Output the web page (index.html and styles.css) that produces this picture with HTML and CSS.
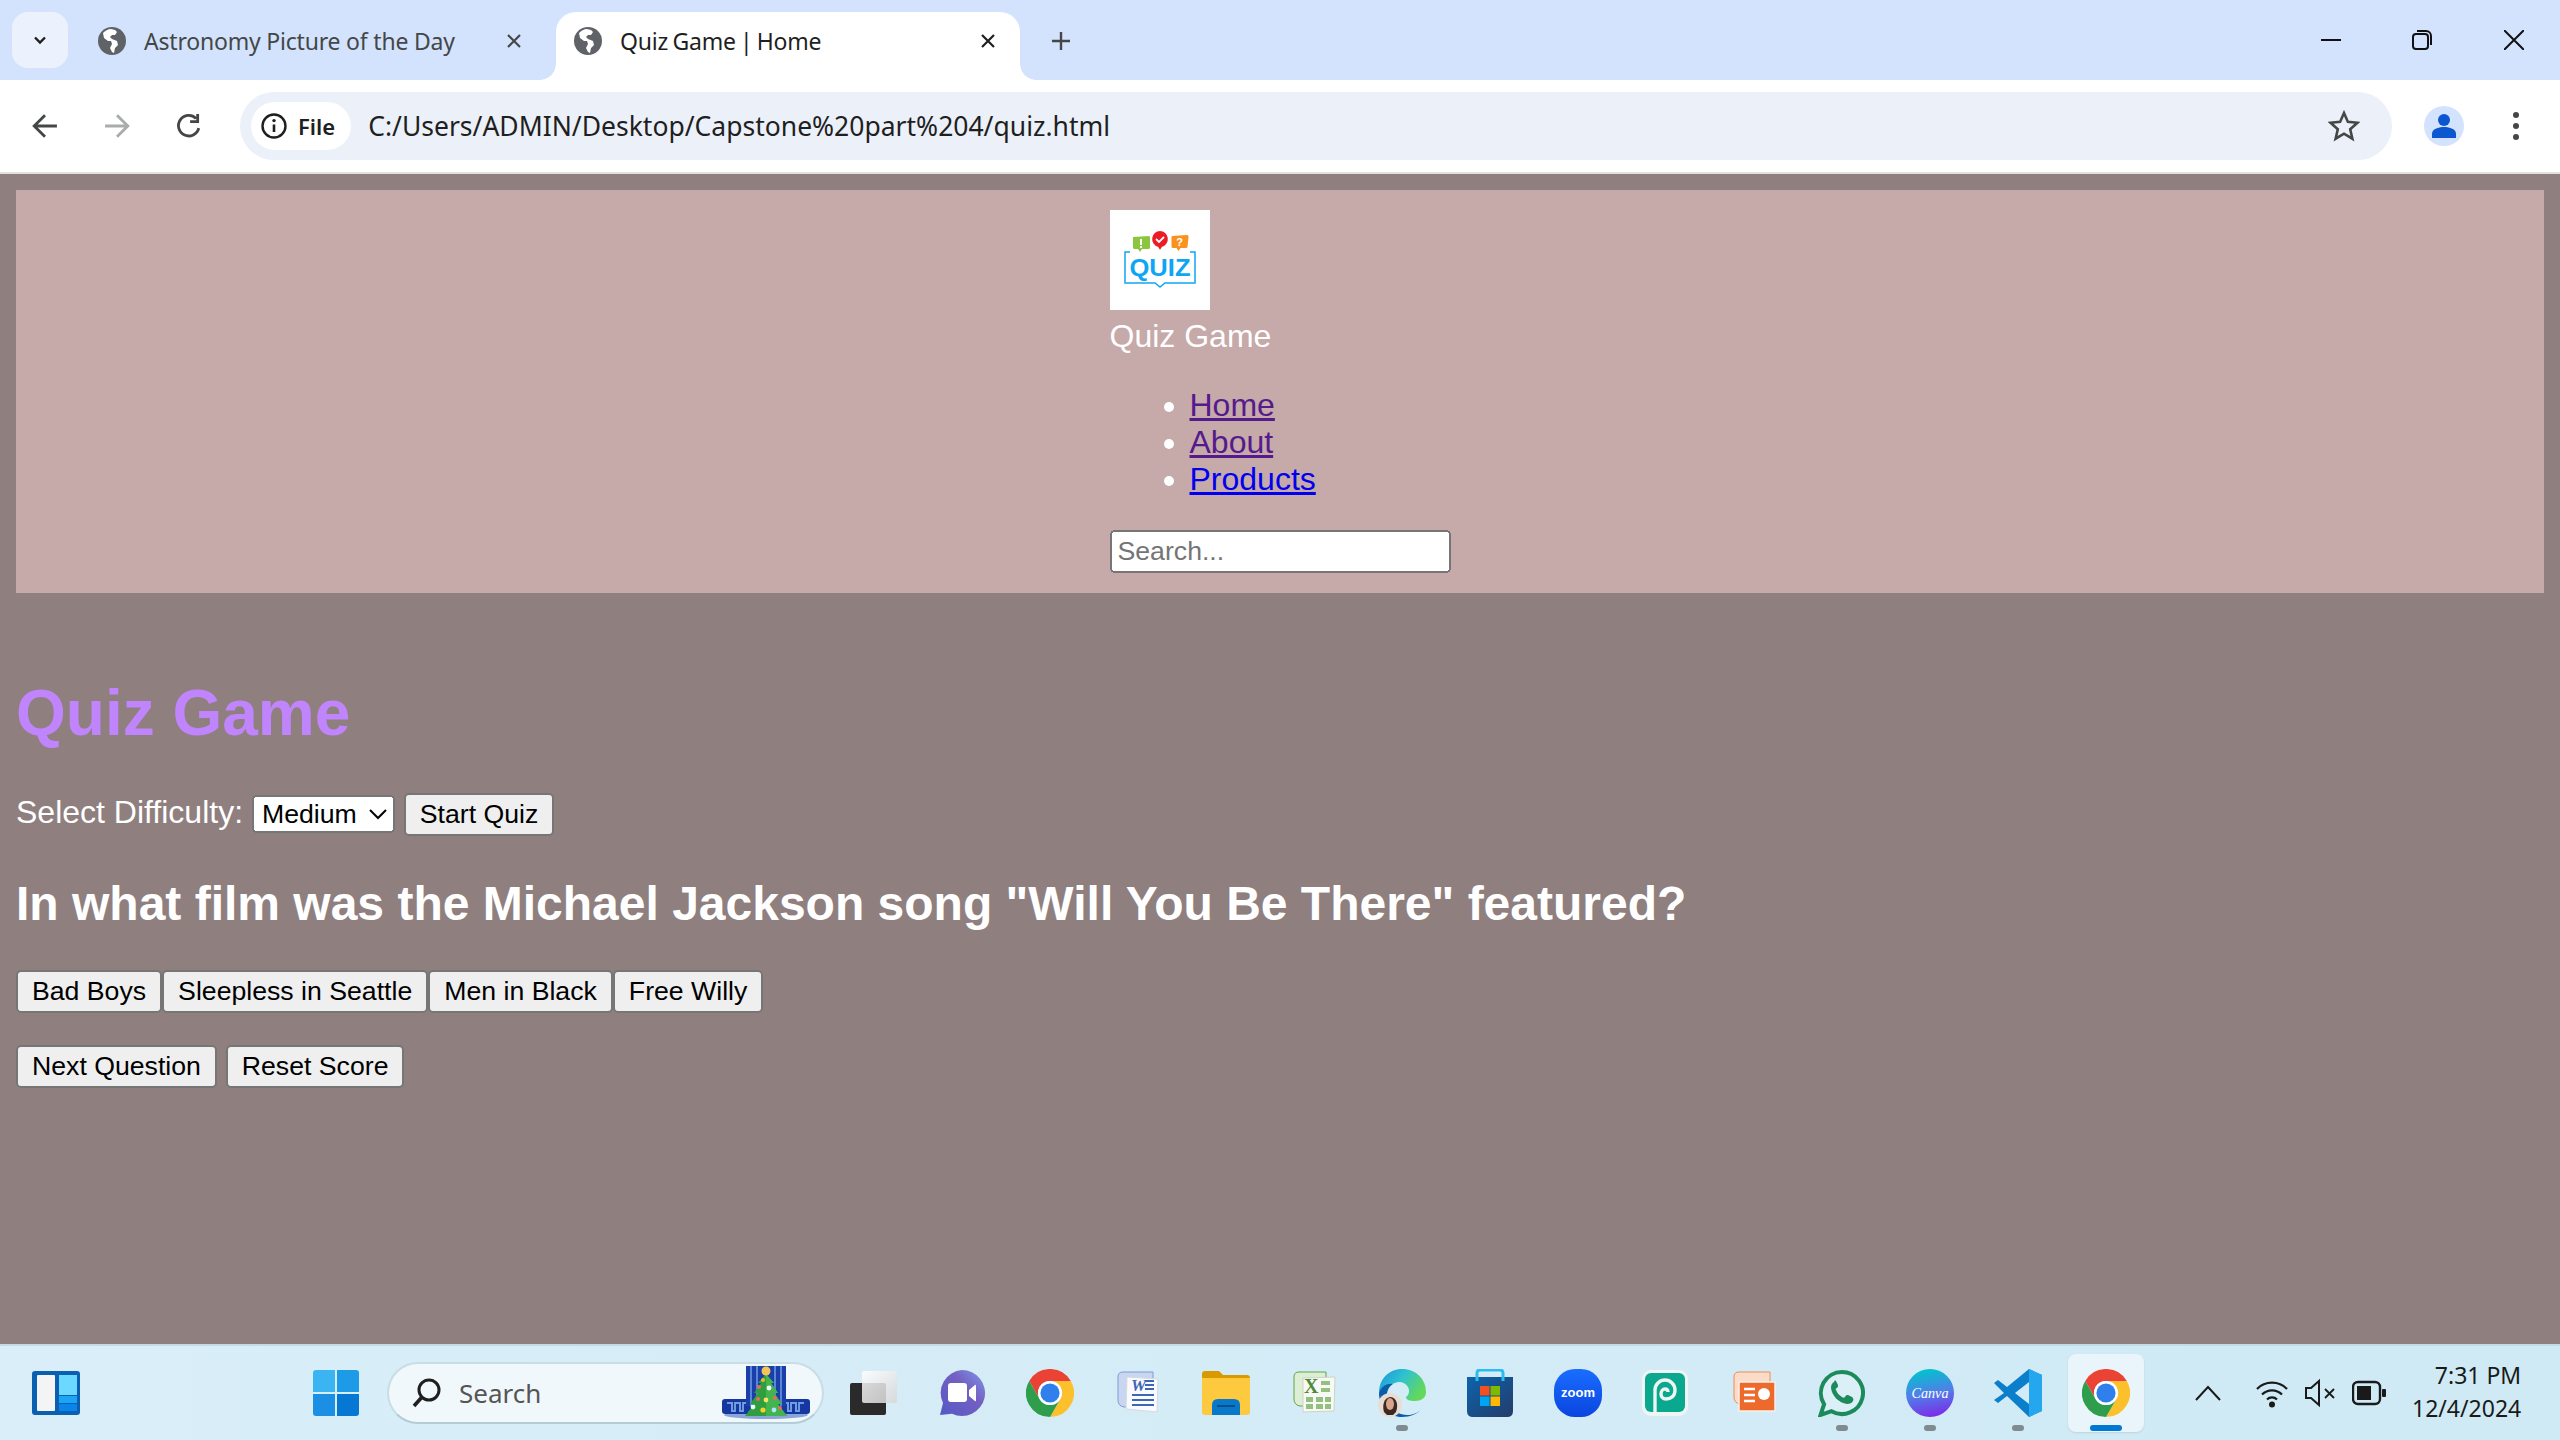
FILE: index.html
```html
<!DOCTYPE html>
<html lang="en">
<head>
    <meta charset="UTF-8">
    <meta name="viewport" content="width=device-width, initial-scale=1.0">
    <title>Quiz Game | Home</title>
    <link rel="stylesheet" href="styles.css">
</head>
<body>
    <svg class="defs" width="0" height="0">
        <defs>
            <linearGradient id="meetFill" x1="0" y1="1" x2="1" y2="0"><stop offset="0" stop-color="#5458c4"/><stop offset=".6" stop-color="#7460c2"/><stop offset="1" stop-color="#7f9ae8"/></linearGradient>
            <linearGradient id="edgeTop" x1="0" y1="0" x2="1" y2=".5"><stop offset="0" stop-color="#1b93dc"/><stop offset=".5" stop-color="#2fc2cf"/><stop offset="1" stop-color="#62d85c"/></linearGradient>
            <linearGradient id="storeFill" x1="0" y1="0" x2="1" y2="1"><stop offset="0" stop-color="#0d63ad"/><stop offset="1" stop-color="#243c69"/></linearGradient>
            <linearGradient id="zoomFill" x1="0" y1="0" x2="0" y2="1"><stop offset="0" stop-color="#1a6dff"/><stop offset="1" stop-color="#0a45df"/></linearGradient>
            <linearGradient id="canvaFill" x1=".4" y1="0" x2=".6" y2="1"><stop offset="0" stop-color="#00c4cc"/><stop offset=".5" stop-color="#4f80e8"/><stop offset="1" stop-color="#7d2ae8"/></linearGradient>
            <linearGradient id="taskLight" x1="0" y1="0" x2="1" y2="1"><stop offset="0" stop-color="#fff"/><stop offset="1" stop-color="#d6d6d6"/></linearGradient>
        </defs>
        <symbol id="globe" viewBox="0 0 28 28">
            <circle cx="14" cy="14" r="14" fill="#5f6368"/>
            <path d="M13 2c-3 0-6 2-8 4l1 5 4 3h3l1 3-2 4 2 4 2 1 1-5 3-3-1-4-5-2-2-2 2-2h3l2-3-2-2z" fill="#fff"/>
        </symbol>
        <symbol id="chrome" viewBox="0 0 48 48">
            <path d="M3.2 12A24 24 0 0 1 44.8 12H24A12 12 0 0 0 13.6 30Z" fill="#ea4335"/>
            <path d="M44.8 12A24 24 0 0 1 24 48L34.4 30A12 12 0 0 0 24 12Z" fill="#fcc02d"/>
            <path d="M24 48A24 24 0 0 1 3.2 12L13.6 30A12 12 0 0 0 34.4 30Z" fill="#2e9e4c"/>
            <circle cx="24" cy="24" r="12" fill="#fff"/>
            <circle cx="24" cy="24" r="9.6" fill="#2f80ed"/>
        </symbol>
    </svg>

    <div class="tabstrip">
        <div class="tab-menu">
            <svg width="16" height="16" viewBox="0 0 16 16"><path d="M3 5.500l5 5 5-5" fill="none" stroke="#1f1f1f" stroke-width="2.400"/></svg>
        </div>
        <div class="tab">
            <svg class="favicon"><use href="#globe"/></svg>
            <span class="tab-title">Astronomy Picture of the Day</span>
            <svg class="tab-close" viewBox="0 0 16 16"><path d="M2 2l12 12M14 2L2 14" stroke="#444746" stroke-width="2.200"/></svg>
        </div>
        <div class="tab tab-active">
            <svg class="favicon"><use href="#globe"/></svg>
            <span class="tab-title">Quiz Game | Home</span>
            <svg class="tab-close" viewBox="0 0 16 16"><path d="M2 2l12 12M14 2L2 14" stroke="#1f1f1f" stroke-width="2.200"/></svg>
        </div>
        <svg class="tab-new" viewBox="0 0 20 20"><path d="M10 1v18M1 10h18" stroke="#444746" stroke-width="2.400"/></svg>
        <div class="window-btns">
            <svg viewBox="0 0 20 20"><path d="M0 10h20" stroke="#111" stroke-width="2"/></svg>
            <svg viewBox="0 0 20 20"><rect x="1" y="4" width="15" height="15" rx="3" fill="none" stroke="#111" stroke-width="2"/><path d="M5 1h9a5 5 0 0 1 5 5v9" fill="none" stroke="#111" stroke-width="2"/></svg>
            <svg viewBox="0 0 20 20"><path d="M0 0l20 20M20 0L0 20" stroke="#111" stroke-width="2"/></svg>
        </div>
    </div>

    <div class="toolbar">
        <svg class="nav-icon" viewBox="0 0 24 24"><path d="M23 12H3M12 2L2 12l10 10" fill="none" stroke="#444746" stroke-width="2.600"/></svg>
        <svg class="nav-icon" viewBox="0 0 24 24"><path d="M1 12h20M12 2l10 10-10 10" fill="none" stroke="#a9abac" stroke-width="2.600"/></svg>
        <svg class="nav-icon" viewBox="0 0 24 24"><path d="M21 14a9.500 9.500 0 1 1-2.500-9M20 1v7h-7" fill="none" stroke="#444746" stroke-width="2.600"/></svg>
        <div class="omnibox">
            <div class="site-chip">
                <svg width="26" height="26" viewBox="0 0 26 26"><circle cx="13" cy="13" r="11.500" fill="none" stroke="#1f1f1f" stroke-width="2.400"/><path d="M13 11.500V19" stroke="#1f1f1f" stroke-width="2.600"/><circle cx="13" cy="7.600" r="1.700" fill="#1f1f1f"/></svg>
                <span>File</span>
            </div>
            <span class="url">C:/Users/ADMIN/Desktop/Capstone%20part%204/quiz.html</span>
            <svg class="star" viewBox="0 0 32 32"><path d="M16 3l3.900 8.900 9.600.9-7.300 6.400 2.200 9.500L16 23.700l-8.400 5 2.200-9.500-7.300-6.400 9.600-.9z" fill="none" stroke="#444746" stroke-width="2.600"/></svg>
        </div>
        <div class="avatar">
            <svg width="26" height="26" viewBox="0 0 26 26"><circle cx="13" cy="7" r="6" fill="#0b57d0"/><path d="M1 25v-4c0-5 6-7 12-7s12 2 12 7v4z" fill="#0b57d0"/></svg>
        </div>
        <div class="menu-dots"><i></i><i></i><i></i></div>
    </div>

    <div class="viewport">
        <div class="page">
            <div class="site-header">
                <div class="brand">
                    <div class="logo-line">
                        <svg class="logo" viewBox="0 0 100 100">
                            <rect width="100" height="100" fill="#fff"/>
                            <path d="M23 27l16-1q1 0 1 2v10q0 1-2 1h-6l-2 3-2-3h-4q-1 0-1-2V28q0-1 0-1z" fill="#8cc63f"/>
                            <rect x="30" y="29" width="2" height="6" fill="#fff"/><rect x="30" y="36" width="2" height="2" fill="#fff"/>
                            <path d="M50 21a8 8 0 0 1 2 15.700l-2 3-2-3a8 8 0 0 1 2-15.700z" fill="#ed1c24"/>
                            <path d="M46 29l3 3 5-5" fill="none" stroke="#fff" stroke-width="1.800"/>
                            <path d="M62 26l15-1q2 0 1.500 2l-1 10q0 1-2 1h-5l-2 3-2-3h-4q-1 0-1-2V27z" fill="#f7931e"/>
                            <text x="69.500" y="36" class="logo-mark">?</text>
                            <path d="M20 42h-5v31h30l5 4 5-4h30V42h-5" fill="none" stroke="#0ea5f5" stroke-width="1.500"/>
                            <text x="50" y="66" class="logo-text" textLength="61" lengthAdjust="spacingAndGlyphs">QUIZ</text>
                        </svg>
                    </div>
                    <div class="brand-name">Quiz Game</div>
                    <ul class="nav-list">
                        <li><a href="#" class="visited">Home</a></li>
                        <li><a href="#" class="visited">About</a></li>
                        <li><a href="#">Products</a></li>
                    </ul>
                    <input type="text" class="search-box" placeholder="Search...">
                </div>
            </div>

            <div class="quiz">
                <h1>Quiz Game</h1>
                <div class="controls">
                    <label for="difficulty">Select Difficulty:</label>
                    <select id="difficulty">
                        <option>Easy</option>
                        <option selected>Medium</option>
                        <option>Hard</option>
                    </select>
                    <button>Start Quiz</button>
                </div>
                <h2>In what film was the Michael Jackson song "Will You Be There" featured?</h2>
                <div class="answers">
                    <button>Bad Boys</button>
                    <button>Sleepless in Seattle</button>
                    <button>Men in Black</button>
                    <button>Free Willy</button>
                </div>
                <div class="actions">
                    <button>Next Question</button>
                    <button>Reset Score</button>
                </div>
            </div>
        </div>
    </div>

    <div class="taskbar">
        <svg class="widgets" viewBox="0 0 48 44">
            <rect width="48" height="44" rx="3" fill="#0b5fb0"/>
            <rect x="5" y="4" width="18" height="36" rx="1" fill="#f4f4f4"/>
            <rect x="27" y="4" width="18" height="20" fill="#6bd8ff"/>
            <rect x="27" y="25" width="18" height="7" fill="#1aa5f5"/>
            <rect x="27" y="33" width="18" height="7" fill="#0a84e8"/>
        </svg>
        <svg class="start" viewBox="0 0 46 46">
            <path d="M3 0h19v22H0V3q0-3 3-3z" fill="#3bb5f2"/>
            <path d="M24 0h19q3 0 3 3v19H24z" fill="#1e9be6"/>
            <path d="M0 24h22v22H3q-3 0-3-3z" fill="#1a8fe3"/>
            <path d="M24 24h22v19q0 3-3 3H24z" fill="#0678d4"/>
        </svg>
        <div class="task-search">
            <svg width="32" height="32" viewBox="0 0 32 32"><circle cx="18" cy="13" r="10" fill="none" stroke="#1f1f1f" stroke-width="3"/><path d="M11 20l-8 9" stroke="#1f1f1f" stroke-width="3.600"/></svg>
            <span>Search</span>
            <svg class="tree" viewBox="0 0 88 54">
                <ellipse cx="44" cy="49" rx="42" ry="4" fill="#8aa6d8"/>
                <rect x="0" y="33" width="88" height="15" rx="3" fill="#16379f"/>
                <path d="M5 37h5v8h3v-8h5v8h3v-8h5M61 37h5v8h3v-8h5v8h3v-8h5" fill="none" stroke="#6f9be0" stroke-width="2"/>
                <rect x="24" y="0" width="40" height="40" fill="#1a3fa8"/>
                <path d="M29 0v40M35 0v40M53 0v40M59 0v40" stroke="#5b86d8" stroke-width="2"/>
                <path d="M44 8l8 9h-3l7 10h-4l8 11h-4l9 12H23l9-12h-4l8-11h-4l7-10h-3z" fill="#2f9e3f"/>
                <path d="M44 8l8 9h-3l7 10h-4l8 11h-4l9 12H44z" fill="#44b54d"/>
                <circle cx="44" cy="5" r="4.500" fill="#f6c453"/>
                <circle cx="41" cy="14" r="2" fill="#f2b632"/><circle cx="37" cy="21" r="2" fill="#e96a5a"/><circle cx="47" cy="22" r="2.400" fill="#fff"/><circle cx="53" cy="32" r="2" fill="#e96a5a"/><circle cx="36" cy="33" r="2" fill="#e96a5a"/><circle cx="44" cy="34" r="2.400" fill="#f7e06a"/><circle cx="31" cy="41" r="2.400" fill="#e8fff0"/><circle cx="41" cy="44" r="2.600" fill="#f7d030"/><circle cx="52" cy="44" r="2.400" fill="#a5e8ff"/><circle cx="58" cy="42" r="2" fill="#e96a5a"/>
            </svg>
        </div>
        <div class="task-icons">
            <div class="task-slot">
                <svg class="task-icon" viewBox="0 0 48 48">
                    <rect x="0" y="14" width="36" height="32" rx="2" fill="#2a2a2a"/>
                    <rect x="12" y="2" width="35" height="32" rx="2" fill="url(#taskLight)" fill-opacity=".85"/>
                </svg>
            </div>
            <div class="task-slot">
                <svg class="task-icon" viewBox="0 0 48 48">
                    <path d="M24 1a23 23 0 1 1-10 43.700L2 46l3-12A23 23 0 0 1 24 1z" fill="url(#meetFill)"/>
                    <rect x="10" y="14" width="19" height="19" rx="3" fill="#fff"/>
                    <path d="M31 21l6-5q1-1 1 1v14q0 2-1 1l-6-5z" fill="#fff"/>
                </svg>
            </div>
            <div class="task-slot">
                <svg class="task-icon"><use href="#chrome"/></svg>
            </div>
            <div class="task-slot">
                <svg class="task-icon" viewBox="0 0 48 48">
                    <path d="M4 8q0-5 5-5h30v35H10q-6-1-6-7z" fill="#c8d6f0" stroke="#7f9bd2"/>
                    <path d="M13 8l31 2-1 33-31-3z" fill="#f9fafd" stroke="#d5dae4"/>
                    <text x="17" y="22" class="word-mark">W</text>
                    <path d="M31 12h9M31 16h9M31 20h9M18 26h22M18 31h22M18 36h22" stroke="#3f66b5" stroke-width="2.200"/>
                </svg>
            </div>
            <div class="task-slot">
                <svg class="task-icon" viewBox="0 0 48 44">
                    <path d="M0 3q0-3 3-3h14l4 4h24q3 0 3 3v6H0z" fill="#d99a00"/>
                    <path d="M0 7h48v34q0 3-3 3H3q-3 0-3-3z" fill="#fcc93f"/>
                    <path d="M10 34q0-6 6-6h16q6 0 6 6v10H10z" fill="#0a78c9"/>
                    <rect x="15" y="34" width="18" height="2" fill="#04508c"/>
                </svg>
            </div>
            <div class="task-slot">
                <svg class="task-icon" viewBox="0 0 48 48">
                    <path d="M4 8q0-5 5-5h27v34H10q-6-1-6-7z" fill="#dcefd4" stroke="#62a544"/>
                    <path d="M13 9l32-1-1 34-31 1z" fill="#f8f9f4" stroke="#ccd4c4"/>
                    <text x="14" y="24" class="excel-mark">X</text>
                    <path d="M31 12h9v4h-9zM31 19h9v4h-9zM16 28h7v5h-7zM26 28h7v5h-7zM35 28h6v5h-6zM16 35h7v5h-7zM26 35h7v5h-7zM35 35h6v5h-6z" fill="#93bf7f"/>
                </svg>
            </div>
            <div class="task-slot">
                <svg class="task-icon" viewBox="0 0 48 48">
                    <path d="M1 24C1 10 11 0 24 0c14 0 24 10 24 23 0 6-5 9-11 9-5 0-9-1-9-4 3-2 4-6 2-10-3-5-9-6-13-4C9 17 3 19 1 24z" fill="url(#edgeTop)"/>
                    <path d="M1 24c2-7 9-10 14-9-5 3-7 9-6 15 2 11 13 17 23 16 5-1 9-3 12-7-4 6-12 9-20 9C11 48 1 38 1 24z" fill="#0c5da8"/>
                    <circle cx="12" cy="36" r="12" fill="#e8ddd3"/>
                    <path d="M6 43c-2-7 0-14 6-15 6 0 9 7 6 15l-3 3H9z" fill="#3a2a22"/>
                    <ellipse cx="12" cy="35" rx="4" ry="6" fill="#d8a48c"/>
                </svg>
                <i class="run-dot"></i>
            </div>
            <div class="task-slot">
                <svg class="task-icon" viewBox="0 0 48 48">
                    <path d="M1 8h46v34q0 6-6 6H7q-6 0-6-6z" fill="url(#storeFill)"/>
                    <path d="M11 12V4q0-3 3-3h20q3 0 3 3v8" fill="none" stroke="#2bbcf0" stroke-width="3"/>
                    <rect x="14" y="17" width="9.500" height="9.500" fill="#f25022"/><rect x="24.500" y="17" width="9.500" height="9.500" fill="#7fba00"/>
                    <rect x="14" y="27.500" width="9.500" height="9.500" fill="#00a4ef"/><rect x="24.500" y="27.500" width="9.500" height="9.500" fill="#ffb900"/>
                </svg>
            </div>
            <div class="task-slot">
                <svg class="task-icon" viewBox="0 0 48 48">
                    <rect width="48" height="48" rx="21" fill="url(#zoomFill)"/>
                    <text x="24" y="28" class="zoom-mark" textLength="34" lengthAdjust="spacingAndGlyphs">zoom</text>
                </svg>
            </div>
            <div class="task-slot">
                <svg class="task-icon" viewBox="0 0 48 48">
                    <rect x="0" y="1" width="46" height="46" rx="9" fill="#eef5f2"/>
                    <rect x="3" y="4" width="40" height="39" rx="6" fill="#0aa88f"/>
                    <path d="M13 43V21a10 10 0 0 1 20 0c0 6-4 9-9 9-3 0-5-2-5-5s2-5 4-5 3 1 3 3" fill="none" stroke="#eef5f2" stroke-width="3.400"/>
                </svg>
            </div>
            <div class="task-slot">
                <svg class="task-icon" viewBox="0 0 48 48">
                    <path d="M4 8q0-5 5-5h31v32H10q-6-1-6-7z" fill="#fbdcc9" stroke="#f08a55"/>
                    <rect x="9" y="13" width="36" height="29" fill="#ee6a2c" stroke="#f7efe9" stroke-width="1.500"/>
                    <circle cx="34" cy="25" r="6" fill="#fff"/>
                    <path d="M14 20h11M14 26h11M14 32h11" stroke="#fff" stroke-width="2.500"/>
                </svg>
            </div>
            <div class="task-slot">
                <svg class="task-icon" viewBox="0 0 48 48">
                    <path d="M24 3a21 21 0 1 1-10.500 39.200L2.500 46l3.600-10.800A21 21 0 0 1 24 3z" fill="#fff" fill-opacity=".2" stroke="#1c8a5a" stroke-width="4"/>
                    <path d="M16 13c-2 1-3 3-3 6 1 8 8 15 16 16 3 0 5-1 6-3 1-2 0-3-1-4l-4-2c-1 0-2 0-3 2-1 1-2 1-3 0-3-2-5-4-6-7-1-1 0-2 1-2 1-1 1-2 1-3l-2-4c-1-1-1-1-2 1z" fill="#1c8a5a"/>
                </svg>
                <i class="run-dot"></i>
            </div>
            <div class="task-slot">
                <svg class="task-icon" viewBox="0 0 48 48">
                    <circle cx="24" cy="24" r="24" fill="url(#canvaFill)"/>
                    <text x="24" y="29" class="canva-mark" textLength="37" lengthAdjust="spacingAndGlyphs">Canva</text>
                </svg>
                <i class="run-dot"></i>
            </div>
            <div class="task-slot">
                <svg class="task-icon" viewBox="0 0 48 48">
                    <path d="M35 0l13 6v36l-13 6-22-21-9 7-4-3 10-7L0 14l4-3 9 7z" fill="#0b7fcc"/>
                    <path d="M35 0l13 6v36l-13 6z" fill="#25a7f0"/>
                    <path d="M35 13L21 24l14 11z" fill="#d3ebf6"/>
                </svg>
                <i class="run-dot"></i>
            </div>
            <div class="task-slot task-slot-active">
                <svg class="task-icon"><use href="#chrome"/></svg>
                <i class="run-bar"></i>
            </div>
        </div>
        <div class="tray">
            <svg class="tray-chevron" viewBox="0 0 26 16"><path d="M1 15L13 2l12 13" fill="none" stroke="#1a1a1a" stroke-width="2"/></svg>
            <svg class="tray-wifi" viewBox="0 0 32 32"><path d="M1 12a21 21 0 0 1 30 0M6 17.500a14 14 0 0 1 20 0M11 22.500a7 7 0 0 1 10 0" fill="none" stroke="#1a1a1a" stroke-width="2.200"/><circle cx="16" cy="27.500" r="3" fill="#1a1a1a"/></svg>
            <svg class="tray-sound" viewBox="0 0 32 32"><path d="M2 11h5l8-7v24l-8-7H2z" fill="none" stroke="#1a1a1a" stroke-width="2"/><path d="M21 12l9 9M30 12l-9 9" stroke="#1a1a1a" stroke-width="1.800"/></svg>
            <svg class="tray-battery" viewBox="0 0 34 32"><rect x="1" y="5" width="27" height="22" rx="5" fill="none" stroke="#1a1a1a" stroke-width="2.400"/><rect x="5" y="9" width="14" height="14" fill="#1a1a1a"/><rect x="30" y="12" width="4" height="8" rx="1" fill="#1a1a1a"/></svg>
            <div class="clock">
                <span>7:31 PM</span>
                <span>12/4/2024</span>
            </div>
        </div>
    </div>
</body>
</html>
```

FILE: styles.css
```css
* {
    box-sizing: border-box;
}
html, body {
    margin: 0;
    height: 100%;
}
body {
    display: flex;
    flex-direction: column;
    overflow: hidden;
    font-family: "Noto Sans", sans-serif;
}
.defs {
    position: absolute;
}

/* browser tabs */
.tabstrip {
    display: flex;
    align-items: flex-end;
    height: 80px;
    background-color: #d3e3fd;
    flex: none;
}
.tab-menu {
    display: flex;
    align-items: center;
    justify-content: center;
    width: 56px;
    height: 56px;
    margin: 0 12px 12px 12px;
    background-color: #ebf2fe;
    border-radius: 16px;
}
.tab {
    display: flex;
    align-items: center;
    width: 488px;
    height: 68px;
    padding: 0 46px 10px 18px;
    color: #444746;
    font-size: 23px;
}
.tab-active {
    position: relative;
    width: 464px;
    margin-left: -12px;
    padding: 0 24px 10px 18px;
    background-color: #fff;
    color: #1f1f1f;
    border-radius: 20px 20px 0 0;
}
.tab-active .tab-title {
    word-spacing: -1.500px;
}
.tab-active::before,
.tab-active::after {
    content: "";
    position: absolute;
    bottom: 0;
    width: 16px;
    height: 16px;
}
.tab-active::before {
    left: -16px;
    background: radial-gradient(circle at 0 0, #d3e3fd 15.500px, #fff 16px);
}
.tab-active::after {
    right: -16px;
    background: radial-gradient(circle at 100% 0, #d3e3fd 15.500px, #fff 16px);
}
.favicon {
    width: 28px;
    height: 28px;
    flex: none;
}
.tab-title {
    flex: 1;
    margin-left: 18px;
    white-space: nowrap;
    letter-spacing: -0.2px;
}
.tab-close {
    width: 16px;
    height: 16px;
    flex: none;
}
.tab-new {
    width: 20px;
    height: 20px;
    margin: 0 0 29px 31px;
}
.window-btns {
    display: flex;
    gap: 72px;
    margin: 0 36px 30px auto;
}
.window-btns svg {
    width: 20px;
    height: 20px;
}
.window-btns svg:first-child {
    margin-right: -1px;
}

/* address bar */
.toolbar {
    display: flex;
    align-items: center;
    flex: none;
    height: 94px;
    padding-left: 32px;
    background-color: #fff;
    border-bottom: 2px solid #e0e0e0;
    border-radius: 16px 16px 0 0;
}
.nav-icon {
    width: 26px;
    height: 26px;
    margin-right: 46px;
}
.nav-icon:nth-child(3) {
    margin-right: 38px;
}
.omnibox {
    display: flex;
    align-items: center;
    flex: 1;
    height: 68px;
    padding: 0 32px 0 11px;
    background-color: #ebf0f9;
    border-radius: 34px;
}
.site-chip {
    display: flex;
    align-items: center;
    gap: 11px;
    height: 48px;
    padding: 0 16px 0 10px;
    background-color: #fff;
    border-radius: 24px;
    color: #1f1f1f;
    font-size: 22px;
    font-weight: 600;
}
.url {
    flex: 1;
    margin-left: 17px;
    color: #1f1f1f;
    font-size: 26.500px;
}
.star {
    width: 32px;
    height: 32px;
}
.avatar {
    display: flex;
    align-items: center;
    justify-content: center;
    width: 40px;
    height: 40px;
    margin-left: 32px;
    background-color: #d3e3fd;
    border-radius: 50%;
}
.menu-dots {
    display: flex;
    flex-direction: column;
    gap: 5px;
    margin: 0 41px 0 49px;
}
.menu-dots i {
    width: 6px;
    height: 6px;
    background-color: #444746;
    border-radius: 50%;
}

/* the quiz page itself, drawn at 200% like the browser zoom */
.viewport {
    flex: 1;
    min-height: 0;
    background-color: #8f7f7f;
}
.page {
    zoom: 2;
    padding: 8px;
    color: #fff;
    font-family: "Liberation Sans", Arial, sans-serif;
    font-size: 16px;
}
.site-header {
    display: flex;
    justify-content: center;
    padding: 10px;
    background-color: #c6a9a9;
}
.brand {
    width: 170.500px;
}
.logo {
    width: 50px;
    height: 50px;
}
.nav-list {
    margin: 16px 0;
    padding-left: 40px;
}
.visited {
    color: #551a8b;
}
.nav-list a:not(.visited) {
    color: #0000ee;
}
.search-box {
    display: block;
    width: 100%;
    padding: 1px 2px;
    font-family: "Liberation Sans", Arial, sans-serif;
    font-size: 13.333px;
}
.logo-text {
    fill: #0ea5f5;
    font-family: "Liberation Sans", Arial, sans-serif;
    font-size: 24px;
    font-weight: bold;
    text-anchor: middle;
}
.logo-mark {
    fill: #fff;
    font-family: "Liberation Sans", Arial, sans-serif;
    font-size: 11px;
    font-weight: bold;
    text-anchor: middle;
}
.quiz {
    padding-top: 20px;
}
h1 {
    margin: 21.440px 0;
    color: #c084fc;
    font-size: 32px;
}
h2 {
    margin: 19.920px 0;
    font-size: 24px;
}
.quiz button,
.quiz select {
    font-family: "Liberation Sans", Arial, sans-serif;
    font-size: 13.333px;
}
.quiz select {
    width: 71.500px;
}
.answers {
    display: flex;
    margin-bottom: 16px;
}

/* windows taskbar */
.taskbar {
    position: relative;
    display: flex;
    align-items: center;
    flex: none;
    height: 96px;
    background: linear-gradient(90deg, #d9eef8, #cfeaf5);
    border-top: 2px solid #c3dbe5;
}
.widgets {
    width: 48px;
    height: 44px;
    margin-left: 32px;
}
.start {
    width: 46px;
    height: 46px;
    margin-left: 233px;
}
.task-search {
    display: flex;
    align-items: center;
    width: 437px;
    height: 62px;
    margin-left: 28px;
    padding-left: 22px;
    background-color: #f1f8fc;
    border: 2px solid #c8dde6;
    border-bottom-color: #b4ccd6;
    border-radius: 31px;
    color: #555;
    font-size: 26px;
}
.task-search span {
    flex: 1;
    margin-left: 16px;
}
.tree {
    width: 88px;
    height: 54px;
    margin-right: 12px;
}
.task-icons {
    display: flex;
    margin-left: 6px;
}
.task-slot {
    position: relative;
    display: flex;
    align-items: center;
    justify-content: center;
    width: 88px;
    height: 78px;
}
.task-icon {
    width: 48px;
    height: 48px;
}
.task-slot-active {
    background-color: #eaf5fb;
    border-radius: 8px;
    box-shadow: 0 1px 2px #bcd3dd;
    width: 76px;
    margin-left: 6px;
}
.run-dot,
.run-bar {
    position: absolute;
    bottom: 1px;
    left: 50%;
    width: 12px;
    height: 6px;
    margin-left: -6px;
    background-color: #7f8b91;
    border-radius: 3px;
}
.run-bar {
    bottom: 1px;
    width: 32px;
    margin-left: -16px;
    background-color: #0078d4;
}
.word-mark {
    fill: #3f66b5;
    font-family: "Liberation Serif", serif;
    font-size: 17px;
    font-style: italic;
    font-weight: bold;
}
.excel-mark {
    fill: #4f8a3c;
    font-family: "Liberation Serif", serif;
    font-size: 20px;
    font-weight: bold;
}
.zoom-mark {
    fill: #fff;
    font-family: "Liberation Sans", Arial, sans-serif;
    font-size: 13px;
    font-weight: bold;
    text-anchor: middle;
}
.canva-mark {
    fill: #fff;
    font-family: "Liberation Serif", serif;
    font-size: 15px;
    font-style: italic;
    text-anchor: middle;
}
.tray {
    display: flex;
    align-items: center;
    margin-left: 51px;
}
.tray svg {
    flex: none;
}
.tray-chevron {
    width: 26px;
    height: 16px;
    margin-right: 35px;
}
.tray-wifi,
.tray-sound {
    width: 32px;
    height: 32px;
    margin-right: 16px;
}
.tray-battery {
    width: 34px;
    height: 32px;
}
.clock {
    display: flex;
    flex-direction: column;
    align-items: flex-end;
    gap: 7px;
    margin: 0 0 4px 26px;
    color: #1a1a1a;
    font-size: 23px;
    line-height: 26px;
}
```
